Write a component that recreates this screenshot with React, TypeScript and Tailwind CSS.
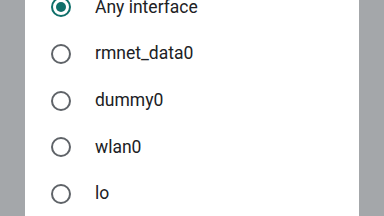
const items = ['Any interface', 'rmnet_data0', 'dummy0', 'wlan0', 'lo'];

function Radio({ checked }: { checked: boolean }) {
  return (
    <span
      className={`flex h-[20px] w-[20px] shrink-0 items-center justify-center rounded-full border-2 ${
        checked ? 'border-[#0f6f6a]' : 'border-[#5f6368]'
      }`}
    >
      {checked && <span className="h-[10px] w-[10px] rounded-full bg-[#0f6f6a]" />}
    </span>
  );
}

export default function App() {
  return (
    <div className="flex h-[216px] w-[384px] overflow-hidden bg-[#a4a7aa] font-['Roboto',sans-serif]">
      <div className="ml-[25px] h-full w-[334px] overflow-hidden bg-white">
        <ul className="-mt-[16px]">
          {items.map((name, i) => (
            <li key={name} className="flex h-[46.67px] items-center pl-[26px]">
              <Radio checked={i === 0} />
              <span className="ml-[24px] text-[17.5px] leading-none text-[#202124]">{name}</span>
            </li>
          ))}
        </ul>
      </div>
    </div>
  );
}
